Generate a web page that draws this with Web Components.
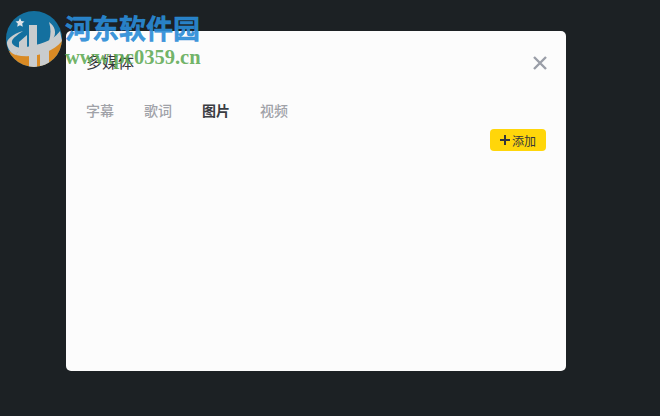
<!DOCTYPE html>
<html lang="zh">
<head>
<meta charset="utf-8">
<title>多媒体</title>
<style>
  html, body { margin: 0; height: 100%; background: #1c2124; }
  body { font-family: "Liberation Sans", "Noto Sans CJK SC", sans-serif; }
</style>
</head>
<body>
<media-page>
  <media-dialog heading="多媒体">
    <media-tab>字幕</media-tab>
    <media-tab>歌词</media-tab>
    <media-tab active>图片</media-tab>
    <media-tab>视频</media-tab>
    <add-button slot="actions">添加</add-button>
  </media-dialog>
  <site-mark slot="mark"></site-mark>
</media-page>

<script>
// Page backdrop
class MediaPage extends HTMLElement {
  constructor() {
    super();
    this.attachShadow({ mode: 'open' });
    this.shadowRoot.innerHTML = `
      <style>
        :host {
          display: block;
          position: relative;
          width: 660px;
          height: 416px;
          box-sizing: border-box;
          padding: 31px 94px 45px 66px;
          background: #1c2124;
          overflow: hidden;
        }
      </style>
      <slot></slot>
      <slot name="mark"></slot>
    `;
  }
}
customElements.define('media-page', MediaPage);

// Dialog with heading, close button and tab row
class MediaDialog extends HTMLElement {
  constructor() {
    super();
    this.attachShadow({ mode: 'open' });
    this.shadowRoot.innerHTML = `
      <style>
        :host {
          display: block;
          height: 100%;
          background: #fcfcfc;
          border-radius: 5px;
          color: #33363b;
        }
        .head {
          display: flex;
          align-items: center;
          justify-content: space-between;
          padding: 20px 19px 0 20px;
          height: 24px;
        }
        .title { font-size: 16px; line-height: 24px; }
        .close { display: block; width: 14px; height: 14px; }
        .tabs {
          display: flex;
          gap: 30px;
          padding: 26px 20px 0;
        }
        .actions {
          display: flex;
          justify-content: flex-end;
          padding: 8px 20px 0;
        }
      </style>
      <div class="head">
        <span class="title"></span>
        <svg class="close" viewBox="0 0 14 14" fill="none" stroke="#9a9ea8" stroke-width="2.4">
          <path d="M1 1L13 13M13 1L1 13"/>
        </svg>
      </div>
      <div class="tabs"><slot></slot></div>
      <div class="actions"><slot name="actions"></slot></div>
    `;
  }

  connectedCallback() {
    this.shadowRoot.querySelector('.title').textContent = this.getAttribute('heading') || '';
  }
}
customElements.define('media-dialog', MediaDialog);

class MediaTab extends HTMLElement {
  constructor() {
    super();
    this.attachShadow({ mode: 'open' });
    this.shadowRoot.innerHTML = `
      <style>
        :host {
          display: block;
          font-size: 14px;
          line-height: 20px;
          font-weight: 500;
          color: #a0a2a8;
        }
        :host([active]) { color: #3a3c42; font-weight: 700; }
      </style>
      <slot></slot>
    `;
  }
}
customElements.define('media-tab', MediaTab);

class AddButton extends HTMLElement {
  constructor() {
    super();
    this.attachShadow({ mode: 'open' });
    this.shadowRoot.innerHTML = `
      <style>
        :host {
          display: flex;
          align-items: center;
          justify-content: center;
          gap: 2px;
          width: 56px;
          height: 22px;
          background: #ffd60a;
          border-radius: 4px;
          font-size: 12px;
          color: #33363b;
        }
        svg { display: block; width: 10px; height: 10px; }
      </style>
      <svg viewBox="0 0 10 10" fill="none" stroke="#33363b" stroke-width="2"><path d="M5 0V10M0 5H10"/></svg>
      <slot></slot>
    `;
  }
}
customElements.define('add-button', AddButton);

// Site watermark that lies over the top left corner
class SiteMark extends HTMLElement {
  constructor() {
    super();
    this.attachShadow({ mode: 'open' });
    this.shadowRoot.innerHTML = `
      <style>
        :host {
          display: block;
          position: absolute;
          left: 6px;
          top: 11px;
          width: 200px;
          height: 58px;
        }
        svg { position: absolute; left: 0; top: 0; width: 56px; height: 56px; }
        .name, .url {
          position: absolute;
          left: 59px;
          white-space: nowrap;
          font-family: "Liberation Serif", "Noto Sans CJK SC", serif;
          font-weight: 700;
        }
        .name {
          top: 2px;
          font-size: 27px;
          line-height: 34px;
          color: rgba(42, 140, 215, 0.92);
          -webkit-text-stroke: 0.5px rgba(42, 140, 215, 0.92);
        }
        .url {
          top: 35px;
          font-size: 20.5px;
          line-height: 22px;
          color: rgba(96, 170, 84, 0.9);
        }
      </style>
      <svg viewBox="0 0 56 56">
        <defs><clipPath id="disc"><circle cx="28" cy="28" r="28"/></clipPath></defs>
        <g clip-path="url(#disc)">
          <rect width="56" height="56" fill="#14709f"/>
          <path d="M0 38C16 50 44 44 56 28V56H0Z" fill="#d98a24"/>
          <!-- left crescent -->
          <path d="M17 20C6 23 0 29 1 33C2 39 6 43 10 44L15 37C9 36 5 33 6 30C7 27 11 24 17 20Z" fill="#c9ccce"/>
          <!-- band across the disc -->
          <path d="M10 44C26 48 46 42 56 30L54 20C48 28 40 33 14 37Z" fill="#c9ccce"/>
          <!-- the 1 -->
          <path d="M13 31L21 24V37H13Z" fill="#c9ccce"/>
          <!-- columns -->
          <path d="M23 14H31V56H23Z" fill="#c9ccce"/>
          <path d="M34 34H43V56H34Z" fill="#c9ccce"/>
          <!-- right crescent -->
          <path d="M43 11C49 15 51 22 47 28L43 30C45 24 45 17 43 11Z" fill="#c9ccce"/>
          <path d="M14 7L15.3 10L18.5 10.4L16.2 12.6L16.8 15.8L14 14.2L11.2 15.8L11.8 12.6L9.5 10.4L12.7 10Z" fill="#dfe4e8"/>
        </g>
      </svg>
      <span class="name">河东软件园</span>
      <span class="url">www.pc0359.cn</span>
    `;
  }
}
customElements.define('site-mark', SiteMark);
</script>
</body>
</html>
